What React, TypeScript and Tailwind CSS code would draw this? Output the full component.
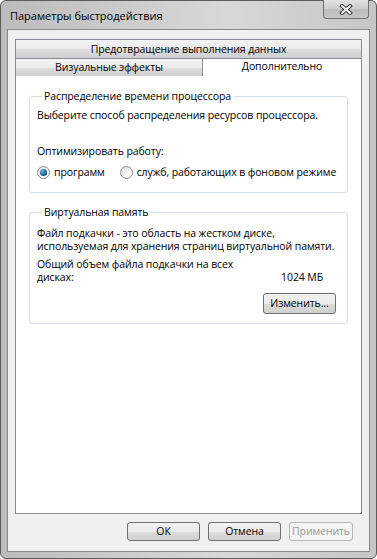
import React from "react";

function Radio({ checked }: { checked?: boolean }) {
  return (
    <span className="w-[13px] h-[13px] rounded-full border border-[#8f8f8f] bg-gradient-to-br from-[#d8d8d8] via-[#f4f4f4] to-[#ffffff] flex items-center justify-center shrink-0">
      {checked ? (
        <span className="w-[7px] h-[7px] rounded-full bg-[radial-gradient(circle_at_35%_35%,#6fb6e8,#1c5a8c_60%,#0f3d66)]" />
      ) : null}
    </span>
  );
}

function Btn({ children, disabled, className = "" }: { children: React.ReactNode; disabled?: boolean; className?: string }) {
  return (
    <div
      className={
        "flex items-center justify-center rounded-[3px] border whitespace-nowrap " +
        (disabled
          ? "border-[#b5b9bc] bg-[#f4f4f4] text-[#9a9a9a] "
          : "border-[#707070] bg-[linear-gradient(#f2f2f2,#ebebeb_50%,#dddddd_51%,#cfcfcf)] text-black ") +
        className
      }
    >
      {children}
    </div>
  );
}

export default function App() {
  return (
    <div className="w-[377px] h-[559px] font-['Open_Sans',sans-serif] text-[10.5px] tracking-[-0.1px] leading-[13px] text-black whitespace-nowrap">
      <div className="relative w-full h-full flex flex-col rounded-[6px] border border-[#5c5c5c] bg-[linear-gradient(90deg,#bcbcbc,#cfcfcf_40%,#d8d8d8_60%,#c6c6c6)]">
        {/* title bar */}
        <div className="h-[28px] flex items-center pl-[9px] text-[11px] tracking-normal text-black">
          Параметры быстродействия
        </div>
        <div className="absolute top-[-1px] right-[7px] w-[46px] h-[19px] rounded-b-[4px] border border-[#707070] border-t-0 bg-[linear-gradient(#e2e2e2,#cdcdcd_50%,#bdbdbd_51%,#c6c6c6)] flex items-center justify-center">
          <svg width="14" height="11" viewBox="0 0 14 11">
            <path d="M3 2 L11 9 M11 2 L3 9" stroke="#3c3c3c" strokeWidth="4" strokeLinecap="square" />
            <path d="M3 2 L11 9 M11 2 L3 9" stroke="#ffffff" strokeWidth="2" strokeLinecap="square" />
          </svg>
        </div>

        {/* client */}
        <div className="flex-1 mx-[6px] mb-[6px] border border-[#8a8a8a] bg-[#f0f0f0] flex flex-col pt-[9px] pl-[7px] pr-[7px]">
          {/* tabs */}
          <div className="flex flex-col">
            <div className="h-[19px] border border-[#898c95] border-b-0 bg-[linear-gradient(#f3f3f3,#ebebeb_50%,#dddddd_51%,#cfcfcf)] flex items-center justify-center">
              Предотвращение выполнения данных
            </div>
            <div className="flex h-[18px]">
              <div className="w-[188px] border border-[#898c95] border-b-0 bg-[linear-gradient(#f3f3f3,#ebebeb_50%,#dddddd_51%,#cfcfcf)] flex items-center justify-center">
                Визуальные эффекты
              </div>
              <div className="flex-1 border-r border-t border-[#898c95] bg-white flex items-start justify-center pt-[1px]">
                Дополнительно
              </div>
            </div>
          </div>

          {/* panel */}
          <div className="h-[438px] border border-[#898c95] border-t-0 bg-white px-[13px] pt-[14px]">
            <fieldset className="border border-[#d5dfe5] rounded-[3px] pl-[7px] pr-[7px] pb-[13px]">
              <legend className="ml-[5px] px-[2px]">Распределение времени процессора</legend>
              <div className="mt-[6px]">Выберите способ распределения ресурсов процессора.</div>
              <div className="mt-[23px]">Оптимизировать работу:</div>
              <div className="mt-[8px] flex items-center">
                <Radio checked />
                <span className="ml-[4px]">программ</span>
                <span className="ml-[15px]" />
                <Radio />
                <span className="ml-[4px]">служб, работающих в фоновом режиме</span>
              </div>
            </fieldset>

            <fieldset className="mt-[13px] border border-[#d5dfe5] rounded-[3px] pl-[7px] pr-[11px] pb-[9px]">
              <legend className="ml-[5px] px-[2px]">Виртуальная память</legend>
              <div className="mt-[8px]">Файл подкачки - это область на жестком диске,</div>
              <div>используемая для хранения страниц виртуальной памяти.</div>
              <div className="mt-[5px]">Общий объем файла подкачки на всех</div>
              <div className="flex justify-between pr-[13px]">
                <span>дисках:</span>
                <span>1024 МБ</span>
              </div>
              <div className="mt-[9px] flex justify-end">
                <Btn className="w-[73px] h-[21px]">Изменить...</Btn>
              </div>
            </fieldset>
          </div>

          {/* buttons */}
          <div className="flex justify-end gap-[8px] pr-[9px] mt-[8px]">
            <Btn className="w-[73px] h-[19px]">ОК</Btn>
            <Btn className="w-[73px] h-[19px]">Отмена</Btn>
            <Btn disabled className="w-[64px] h-[19px]">Применить</Btn>
          </div>
        </div>
      </div>
    </div>
  );
}
